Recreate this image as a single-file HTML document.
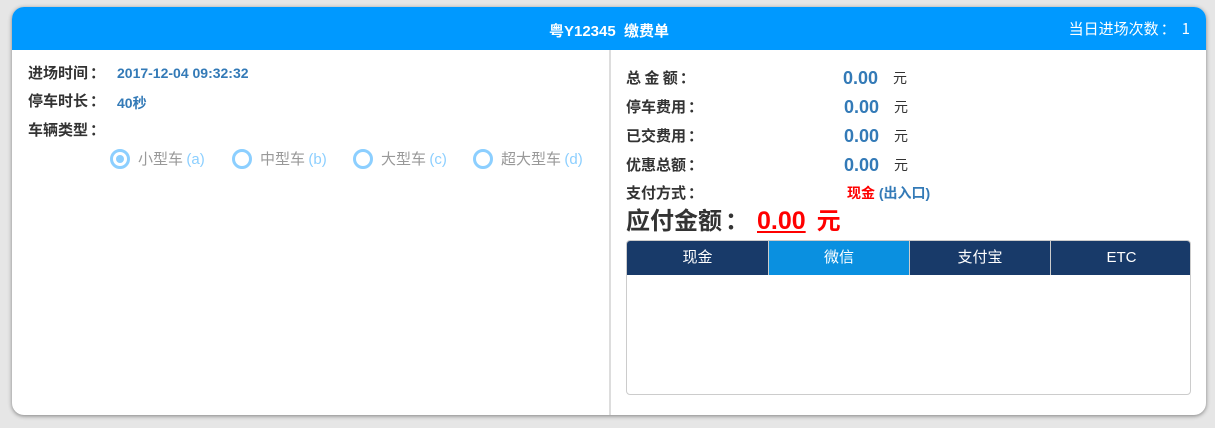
<!DOCTYPE html>
<html><head><meta charset="utf-8"><style>
*{margin:0;padding:0;box-sizing:border-box}
body{width:1215px;height:428px;background:#e6e6e6;font-family:"Liberation Sans","Noto Sans CJK SC",sans-serif;position:relative;overflow:hidden}
.card{position:absolute;left:12px;top:7px;width:1194px;height:408px;background:#fff;border-radius:12px;box-shadow:0 1px 4px rgba(0,0,0,.45);overflow:hidden}
.hd{position:absolute;left:0;top:0;width:100%;height:43px;background:#0099ff;color:#fff}
.t{position:absolute;font-size:14px;white-space:nowrap}
.c{font-family:"Noto Sans CJK SC",sans-serif}
.div{position:absolute;left:597px;top:43px;width:2px;height:365px;background:#ddd}
.lb{color:#333;font-weight:bold;font-family:"Noto Sans CJK SC",sans-serif;font-size:15px;line-height:18px}
.lb i,.k{font-style:normal;margin-left:2px}
.v{color:#337ab7;font-weight:bold}
.r{position:absolute;top:142px;width:20px;height:20px;border:3px solid #8ccfff;border-radius:50%}
.r.on::after{content:"";position:absolute;left:3px;top:3px;width:8px;height:8px;border-radius:50%;background:#8ccfff}
.rt{color:#999;font-size:15px;font-family:"Noto Sans CJK SC",sans-serif;line-height:18px}
.rt span{color:#8ccfff;font-family:"Liberation Sans",sans-serif}
.box{position:absolute;left:614px;top:233px;width:565px;height:155px;border:1px solid #ccc;border-radius:4px;overflow:hidden}
.tab{position:absolute;top:0;height:34px;line-height:33px;text-align:center;color:#fff;font-size:15px;background:#183a69;width:141px}
</style></head><body>
<div class="card">
 <div class="hd">
  <div class="t" style="left:0;width:1194px;text-align:center;top:13px;font-weight:bold;font-size:15px">粤Y12345&nbsp; 缴费单</div>
  <div class="t c" style="right:16px;top:13px;font-size:15px;line-height:18px">当日进场次数<i style="font-style:normal;margin:0 6px 0 2px">：</i>1</div>
 </div>
 <div class="div"></div>
 <div class="t lb" style="left:16px;top:57px">进场时间<i>：</i></div>
 <div class="t v" style="left:105px;top:58px">2017-12-04 09:32:32</div>
 <div class="t lb" style="left:16px;top:85px">停车时长<i>：</i></div>
 <div class="t v" style="left:105px;top:86px">40秒</div>
 <div class="t lb" style="left:16px;top:114px">车辆类型<i>：</i></div>
 <div class="r on" style="left:98px"></div><div class="t rt" style="left:126px;top:143px">小型车 <span>(a)</span></div>
 <div class="r" style="left:220px"></div><div class="t rt" style="left:248px;top:143px">中型车 <span>(b)</span></div>
 <div class="r" style="left:341px"></div><div class="t rt" style="left:369px;top:143px">大型车 <span>(c)</span></div>
 <div class="r" style="left:461px"></div><div class="t rt" style="left:489px;top:143px">超大型车 <span>(d)</span></div>

 <div class="t lb" style="left:614px;top:62px">总 金 额<i>：</i></div>
 <div class="t v" style="left:831px;top:61px;font-size:18px">0.00</div><div class="t c" style="left:881px;top:61px;color:#333">元</div>
 <div class="t lb" style="left:614px;top:91px">停车费用<i>：</i></div>
 <div class="t v" style="left:832px;top:90px;font-size:18px">0.00</div><div class="t c" style="left:882px;top:90px;color:#333">元</div>
 <div class="t lb" style="left:614px;top:120px">已交费用<i>：</i></div>
 <div class="t v" style="left:832px;top:119px;font-size:18px">0.00</div><div class="t c" style="left:882px;top:119px;color:#333">元</div>
 <div class="t lb" style="left:614px;top:149px">优惠总额<i>：</i></div>
 <div class="t v" style="left:832px;top:148px;font-size:18px">0.00</div><div class="t c" style="left:882px;top:148px;color:#333">元</div>
 <div class="t lb" style="left:614px;top:177px">支付方式<i>：</i></div>
 <div class="t" style="left:835px;top:177px;font-weight:bold;line-height:18px"><span class="c" style="color:#f00">现金</span><span style="color:#337ab7;font-size:14px"> (出入口)</span></div>
 <div class="t c" style="left:614px;top:196px;font-size:24px;line-height:32px;font-weight:bold;color:#333">应付金额<i style="font-style:normal;margin:0 8px 0 3px">：</i><span style="color:#f00;text-decoration:underline;font-family:'Liberation Sans',sans-serif;font-size:25px">0.00</span><span style="color:#f00"> &nbsp;元</span></div>
 <div class="box">
  <div class="tab" style="left:0">现金</div>
  <div class="tab" style="left:141px;background:#0a90e0;border-left:1px solid #ccc">微信</div>
  <div class="tab" style="left:282px;border-left:1px solid #ccc">支付宝</div>
  <div class="tab" style="left:423px;border-left:1px solid #ccc;width:142px">ETC</div>
 </div>
</div>
</body></html>
